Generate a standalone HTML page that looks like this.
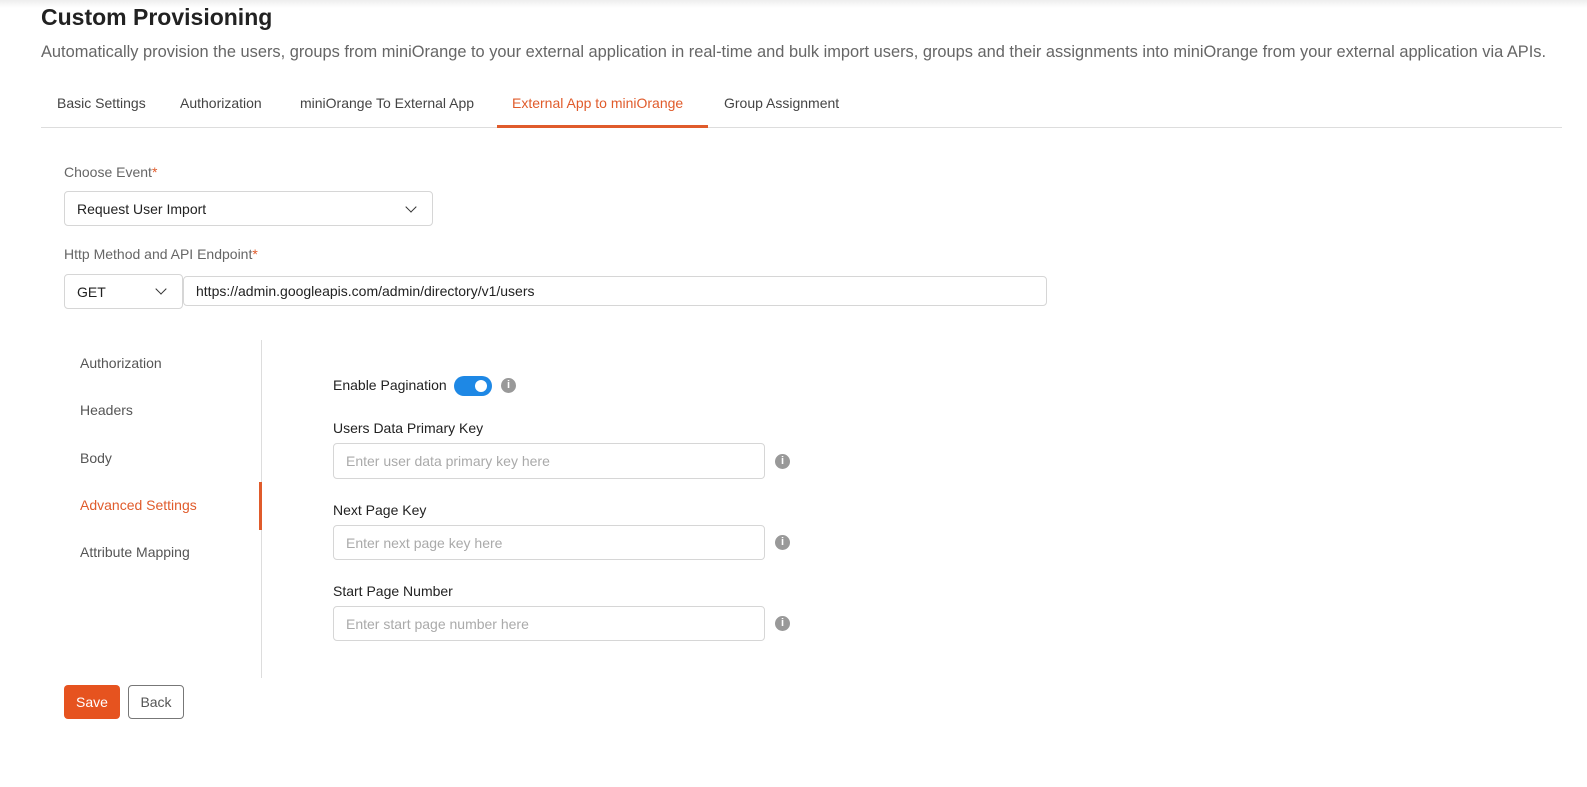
<!DOCTYPE html>
<html><head><style>
body{margin:0;width:1587px;height:787px;background:#fff;font-family:"Liberation Sans",sans-serif;position:relative;overflow:hidden;color:#222}
.a{position:absolute;white-space:nowrap}
.top{position:absolute;left:0;top:0;width:1587px;height:8px;background:linear-gradient(#eee,#fff)}
h1{position:absolute;left:41px;top:4px;margin:0;font-size:23px;font-weight:bold;color:#222}
.tab{font-size:14px;color:#444;top:95px}
.inp{position:absolute;border:1px solid #d6d6d6;border-radius:4px;box-sizing:border-box;font-size:14px;color:#222;padding-left:12px;display:flex;align-items:center}
.ph{color:#aaa}
.lbl{font-size:14px;color:#666}
.lbl2{font-size:14px;color:#222}
.side{font-size:14px;color:#555;left:80px}
.info{position:absolute;width:15px;height:15px;border-radius:50%;background:#999;color:#fff;font-size:11px;font-weight:bold;text-align:center;line-height:15px}
.chev{position:absolute;width:7px;height:7px;border-right:1.6px solid #333;border-bottom:1.6px solid #333;transform:rotate(45deg)}
</style></head><body>
<div class="top"></div>
<h1>Custom Provisioning</h1>
<div class="a" style="left:41px;top:43px;font-size:16.4px;color:#666">Automatically provision the users, groups from miniOrange to your external application in real-time and bulk import users, groups and their assignments into miniOrange from your external application via APIs.</div>
<div class="a tab" style="left:57px">Basic Settings</div>
<div class="a tab" style="left:180px">Authorization</div>
<div class="a tab" style="left:300px">miniOrange To External App</div>
<div class="a tab" style="left:512px;color:#e05b2b">External App to miniOrange</div>
<div class="a tab" style="left:724px">Group Assignment</div>
<div class="a" style="left:41px;top:127px;width:1521px;height:1px;background:#ddd"></div>
<div class="a" style="left:497px;top:125px;width:211px;height:3px;background:#e05b2b"></div>

<div class="a lbl" style="left:64px;top:164px">Choose Event<span style="color:#e05b2b">*</span></div>
<div class="inp" style="left:64px;top:191px;width:369px;height:35px">Request User Import</div>
<div class="chev" style="left:407px;top:203px"></div>
<div class="a lbl" style="left:64px;top:246px">Http Method and API Endpoint<span style="color:#e05b2b">*</span></div>
<div class="inp" style="left:64px;top:274px;width:119px;height:35px">GET</div>
<div class="chev" style="left:157px;top:285px"></div>
<div class="inp" style="left:183px;top:276px;width:864px;height:30px">https://admin.googleapis.com/admin/directory/v1/users</div>

<div class="a side" style="top:355px">Authorization</div>
<div class="a side" style="top:402px">Headers</div>
<div class="a side" style="top:450px">Body</div>
<div class="a side" style="top:497px;color:#e05b2b">Advanced Settings</div>
<div class="a side" style="top:544px">Attribute Mapping</div>
<div class="a" style="left:261px;top:340px;width:1px;height:338px;background:#ddd"></div>
<div class="a" style="left:259px;top:482px;width:3px;height:48px;background:#e05b2b"></div>

<div class="a lbl2" style="left:333px;top:377px">Enable Pagination</div>
<div class="a" style="left:454px;top:376px;width:38px;height:20px;border-radius:10px;background:#1e88e5"></div>
<div class="a" style="left:475px;top:380px;width:12px;height:12px;border-radius:50%;background:#fff"></div>
<div class="info" style="left:501px;top:378px">i</div>

<div class="a lbl2" style="left:333px;top:420px">Users Data Primary Key</div>
<div class="inp ph" style="left:333px;top:443px;width:432px;height:36px">Enter user data primary key here</div>
<div class="info" style="left:775px;top:454px">i</div>
<div class="a lbl2" style="left:333px;top:502px">Next Page Key</div>
<div class="inp ph" style="left:333px;top:525px;width:432px;height:35px">Enter next page key here</div>
<div class="info" style="left:775px;top:535px">i</div>
<div class="a lbl2" style="left:333px;top:583px">Start Page Number</div>
<div class="inp ph" style="left:333px;top:606px;width:432px;height:35px">Enter start page number here</div>
<div class="info" style="left:775px;top:616px">i</div>

<div class="a" style="left:64px;top:685px;width:56px;height:34px;border-radius:4px;background:#e6531f;color:#fff;font-size:14px;text-align:center;line-height:34px">Save</div>
<div class="a" style="left:128px;top:685px;width:54px;height:32px;border-radius:4px;border:1px solid #777;color:#555;font-size:14px;text-align:center;line-height:32px">Back</div>
</body></html>
